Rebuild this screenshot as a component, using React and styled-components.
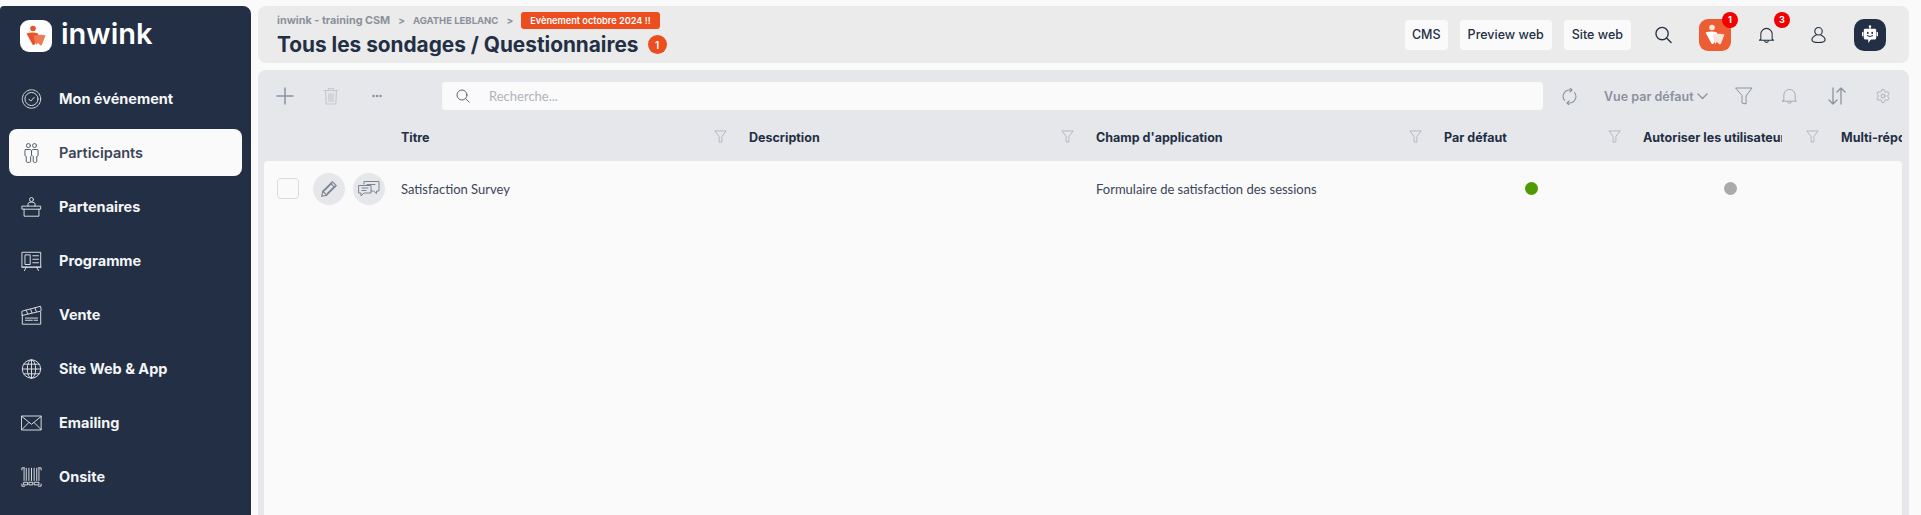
import React from "react";
import styled, { createGlobalStyle } from "styled-components";
import { Settings } from "lucide-react";

const GlobalStyle = createGlobalStyle`
  html, body {
    margin: 0;
    height: 100%;
    background: #fafafa;
    font-family: Inter, "Liberation Sans", sans-serif;
  }
  * { box-sizing: border-box; }
`;

const line = { fill: "none", stroke: "currentColor", strokeWidth: 1.1, strokeLinecap: "round", strokeLinejoin: "round" };

const Ico = ({ children }) => (
  <svg width="22" height="22" viewBox="0 0 24 24" {...line}>
    {children}
  </svg>
);

const BrandMark = ({ a, b, dot }) => (
  <svg width="32" height="32" viewBox="0 0 32 32">
    <circle cx="13" cy="8.5" r="2.8" fill={dot} />
    <path d="M6.5 13.5 Q13 11.5 18 13.5 L19 17 L14.5 24.5 Q13.5 25.5 12.5 24.5 Z" fill={a} />
    <path d="M13.5 16 Q20 14 25.5 15.5 L22 24.5 Q21 26 20 25 L18 23 L16 25 Z" fill={b} />
  </svg>
);

const EventIcon = () => (
  <Ico>
    <circle cx="12" cy="12" r="10.5" strokeDasharray="2.5 1" />
    <circle cx="12" cy="12" r="7.5" />
    <path d="M9 12.2l2.2 2.2 4-4.4" />
  </Ico>
);
const PeopleIcon = () => (
  <Ico>
    <circle cx="8.5" cy="3.5" r="2.3" />
    <circle cx="15.5" cy="3.5" r="2.3" />
    <path d="M5 8h5c1 0 2 .8 2 1.500V15l-1 1v5.500c0 .8-.6 1.200-1.200 1.200H7.200c-.7 0-1.200-.5-1.200-1.200V16l-1.500-1V9.500C4.500 8.700 4.500 8 5 8z" />
    <path d="M12 9.500C12 8.700 13 8 14 8h5c.5 0 .5.700.5 1.500V15L18 16v5.500c0 .700-.5 1.200-1.200 1.200h-1.600c-.6 0-1.200-.4-1.200-1.200V16l-1-1" />
  </Ico>
);
const PodiumIcon = () => (
  <Ico>
    <circle cx="12" cy="3.500" r="2.300" />
    <path d="M8 11V8.500C8 7 9.500 6.500 12 6.500s4 .5 4 2V11" />
    <path d="M1.500 11h21v3.500h-21z" />
    <path d="M3.500 14.500V22.500h17v-8" />
  </Ico>
);
const BoardIcon = () => (
  <Ico>
    <path d="M1.500 2h21v17h-21z" />
    <path d="M5 5h5.500v11H5zM13.500 6H20M13.500 10H20M13.500 14H20" />
    <path d="M1 19h22M6 19l-2 4M18 19l2 4" />
  </Ico>
);
const TicketsIcon = () => (
  <Ico>
    <path d="M1.500 12v10.500h21V9" />
    <path d="M1.500 7.500L22.500 2l.5 5.500-21.500 5z" />
    <path d="M6 6.500l1.500 4M11 5.500l1.500 4M16 4l1.500 4" />
    <path d="M5 15.500h14M5 18h8M15 18h4" />
  </Ico>
);
const GlobeIcon = () => (
  <Ico>
    <circle cx="12" cy="12" r="10.500" />
    <ellipse cx="12" cy="12" rx="4.800" ry="10.500" />
    <path d="M12 1.500v21M1.500 12h21M3 6.500h18M3 17.500h18" />
  </Ico>
);
const MailIcon = () => (
  <Ico>
    <path d="M1 4h22v16H1z" />
    <path d="M1 4.500l11 9 11-9M1 19.500l8-8M23 19.500l-8-8" />
  </Ico>
);
const BarcodeIcon = () => (
  <Ico>
    <path d="M1 4V1.500h3M20 1.500h3V4M1 20v2.500h3M20 22.500h3V20" />
    <path d="M3.500 2v14M6 2v14M9 2v14M12 2v14M15 2v14M18 2v14M20.500 2v14" />
    <path d="M3.500 18h4v3h-4zM9.500 18h4v3h-4zM15.500 18h5v3h-5z" />
  </Ico>
);

const navItems = [
  { label: "Mon événement", icon: <EventIcon /> },
  { label: "Participants", icon: <PeopleIcon />, active: true },
  { label: "Partenaires", icon: <PodiumIcon /> },
  { label: "Programme", icon: <BoardIcon /> },
  { label: "Vente", icon: <TicketsIcon /> },
  { label: "Site Web & App", icon: <GlobeIcon /> },
  { label: "Emailing", icon: <MailIcon /> },
  { label: "Onsite", icon: <BarcodeIcon /> },
];

const columns = [
  { title: "Titre", width: 348 },
  { title: "Description", width: 347 },
  { title: "Champ d'application", width: 348 },
  { title: "Par défaut", width: 199 },
  { title: "Autoriser les utilisateurs à répondre", width: 198 },
  { title: "Multi-réponses", width: 61, noFilter: true },
];

const FilterIcon = () => (
  <svg width="13" height="13" viewBox="0 0 14 14" fill="none" stroke="currentColor" strokeWidth="0.8" strokeLinejoin="round">
    <path d="M1 1h12L8.500 7v6h-3V7z" />
  </svg>
);

export default function App() {
  return (
    <Page>
      <GlobalStyle />
      <Sidebar>
        <Brand>
          <LogoTile>
            <BrandMark a="#e8532a" b="#ee7a52" dot="#e8532a" />
          </LogoTile>
          <BrandName>inwink</BrandName>
        </Brand>
        <Nav>
          {navItems.map((item) => (
            <NavItem key={item.label} $active={item.active}>
              <NavIcon>{item.icon}</NavIcon>
              <span>{item.label}</span>
            </NavItem>
          ))}
        </Nav>
      </Sidebar>

      <Main>
        <Header>
          <div>
            <Breadcrumb>
              <Crumb $size={10.8}>inwink - training CSM</Crumb>
              <Sep>&gt;</Sep>
              <Crumb $size={9.5}>AGATHE LEBLANC</Crumb>
              <Sep>&gt;</Sep>
              <EventPill>Evènement octobre 2024 !!</EventPill>
            </Breadcrumb>
            <TitleRow>
              <Title>Tous les sondages / Questionnaires</Title>
              <CountBadge>1</CountBadge>
            </TitleRow>
          </div>
          <HeaderActions>
            <LinkButton $pad={7}>CMS</LinkButton>
            <LinkButton>Preview web</LinkButton>
            <LinkButton>Site web</LinkButton>
            <HeaderIcon $w={17} $ml={24}>
              <svg width="18" height="18" viewBox="0 0 18 18" {...line} strokeWidth="1.4">
                <circle cx="7.500" cy="7.500" r="6.500" />
                <path d="M12.500 12.500l4.500 4.500" />
              </svg>
            </HeaderIcon>
            <OrangeTile $ml={27}>
              <BrandMark a="#fff" b="#fbe4dc" dot="#fde3da" />
              <RedBadge>1</RedBadge>
            </OrangeTile>
            <HeaderIcon $w={17} $ml={27}>
              <svg width="18" height="18" viewBox="0 0 18 18" {...line} strokeWidth="1.1">
                <path d="M3 13.500V8a6 6 0 0 1 12 0v5.500l1.500 1h-15z" />
                <path d="M7 14.800a2 2 0 0 0 4 0" />
              </svg>
              <RedBadge $top={-14} $right={-15}>3</RedBadge>
            </HeaderIcon>
            <HeaderIcon $w={15} $ml={36}>
              <svg width="16" height="18" viewBox="0 0 16 18" {...line} strokeWidth="1.200">
                <circle cx="8" cy="5" r="4" />
                <path d="M5.500 9C2.500 10.500 1 12 1 14c0 2 2 3 7 3s7-1 7-3c0-2-1.500-3.500-4.500-5" />
              </svg>
            </HeaderIcon>
            <BotTile $ml={28}>
              <svg width="16" height="20" viewBox="0 0 18 22" fill="#fff">
                <circle cx="9" cy="1.500" r="1.400" />
                <rect x="8.400" y="1.500" width="1.200" height="3" />
                <rect x="0" y="7.500" width="1.600" height="5" rx="0.600" />
                <rect x="16.400" y="7.500" width="1.600" height="5" rx="0.600" />
                <path d="M3.500 4h11a1.500 1.500 0 0 1 1.500 1.500v9a1.500 1.500 0 0 1-1.500 1.500h-4.500l-3 4v-4H3.500A1.500 1.500 0 0 1 2 14.500v-9A1.500 1.500 0 0 1 3.500 4z" />
                <rect x="5.600" y="7.500" width="1.800" height="2.200" fill="#222f44" />
                <rect x="10.600" y="7.500" width="1.800" height="2.200" fill="#222f44" />
                <path d="M5.500 11.500q3.500 2.500 7 0" fill="none" stroke="#222f44" strokeWidth="1.100" />
              </svg>
            </BotTile>
          </HeaderActions>
        </Header>

        <Panel>
          <Toolbar>
            <ToolIcon $w={18} $ml={0} $c="#8a94a3">
              <svg width="18" height="18" viewBox="0 0 18 18" {...line} strokeWidth="1.500">
                <path d="M9 1v16M1 9h16" />
              </svg>
            </ToolIcon>
            <ToolIcon $w={16} $ml={29} $c="#c4c8cf">
              <svg width="16" height="18" viewBox="0 0 16 18" {...line} strokeWidth="1.200">
                <path d="M1 3.500h14M5.500 3.500V1.500h5v2M2.500 3.500l.7 13.500h9.600l.7-13.500M6 6.500v8M8 6.500v8M10 6.500v8" />
              </svg>
            </ToolIcon>
            <ToolIcon $w={10} $ml={33} $c="#8a94a3">
              <svg width="10" height="4" viewBox="0 0 10 4" fill="currentColor">
                <circle cx="1.500" cy="2" r="1.300" />
                <circle cx="5" cy="2" r="1.300" />
                <circle cx="8.500" cy="2" r="1.300" />
              </svg>
            </ToolIcon>
            <SearchBox>
              <svg width="14" height="14" viewBox="0 0 14 14" {...line} stroke="#5c6675" strokeWidth="1">
                <circle cx="6" cy="6" r="5" />
                <path d="M9.800 9.800l3.500 3.500" />
              </svg>
              <SearchPlaceholder>Recherche...</SearchPlaceholder>
            </SearchBox>
            <ToolIcon $w={15} $ml={19} $c="#8a94a3">
              <svg width="15" height="17" viewBox="0 0 15 17" {...line}>
                <path d="M2.500 12.500A6.500 6.500 0 0 1 7.500 2l2.500 0M8 0l2 2-2 2" />
                <path d="M12.500 4.500A6.500 6.500 0 0 1 7.500 15L5 15M7 13l-2 2 2 2" />
              </svg>
            </ToolIcon>
            <ViewSelect>
              Vue par défaut
              <svg width="11" height="7" viewBox="0 0 11 7" {...line} strokeWidth="1.300">
                <path d="M1 1l4.500 4.500L10 1" />
              </svg>
            </ViewSelect>
            <ToolIcon $w={18} $ml={27} $c="#8a94a3">
              <svg width="18" height="18" viewBox="0 0 18 18" {...line} strokeWidth="1">
                <path d="M1 1h16l-6 8v8l-4-1V9z" />
              </svg>
            </ToolIcon>
            <ToolIcon $w={17} $ml={28} $c="#a0a7b2">
              <svg width="17" height="18" viewBox="0 0 18 18" {...line} strokeWidth="1">
                <path d="M3 13.500V8a6 6 0 0 1 12 0v5.500l1.500 1h-15z" />
                <path d="M7 14.800a2 2 0 0 0 4 0" />
              </svg>
            </ToolIcon>
            <ToolIcon $w={18} $ml={30} $c="#8a94a3">
              <svg width="18" height="18" viewBox="0 0 18 18" {...line} strokeWidth="1.300">
                <path d="M5 1v16M1 13l4 4 4-4M13 17V1M9 5l4-4 4 4" />
              </svg>
            </ToolIcon>
            <ToolIcon $w={16} $ml={29} $c="#a0a7b2">
              <Settings size={16} strokeWidth={1.3} />
            </ToolIcon>
          </Toolbar>

          <ColumnsRow>
            {columns.map((col) => (
              <ColumnHead key={col.title} $w={col.width} $bare={col.noFilter}>
                <ColumnLabel>{col.title}</ColumnLabel>
                {!col.noFilter && (
                  <ColumnFilter>
                    <FilterIcon />
                  </ColumnFilter>
                )}
              </ColumnHead>
            ))}
          </ColumnsRow>

          <TableBody>
            <Row>
              <RowActions>
                <Checkbox />
                <RoundAction $ml={14}>
                  <svg width="18" height="18" viewBox="0 0 16 16" {...line} strokeWidth="1">
                    <path d="M1.500 14.500l1-4.500L11 1.500l3.500 3.500L6 13.500z" />
                    <path d="M9.500 3l3.500 3.500M2.500 10L6 13.500M4 9.500L10.500 3M6.500 12L13 5.500" />
                  </svg>
                </RoundAction>
                <RoundAction $ml={8}>
                  <svg width="22" height="18" viewBox="0 0 22 18" {...line} strokeWidth="1">
                    <path d="M6 4V1.500h15V11h-2.500v2.500L15.500 11H13" />
                    <path d="M1 5.500h12V13H6l-3 3v-3H1z" />
                    <path d="M9 4.500h8M4 8h6M4 10.500h4" />
                  </svg>
                </RoundAction>
              </RowActions>
              <Cell $w={348}>Satisfaction Survey</Cell>
              <Cell $w={347} />
              <Cell $w={348}>Formulaire de satisfaction des sessions</Cell>
              <DotCell $w={199}>
                <StatusDot $c="#4e9a00" />
              </DotCell>
              <DotCell $w={198}>
                <StatusDot $c="#aaaaaa" />
              </DotCell>
            </Row>
          </TableBody>
        </Panel>
      </Main>
    </Page>
  );
}

const Page = styled.div`
  display: flex;
  height: 515px;
  padding-top: 6px;
  overflow: hidden;
  background: #fafafa;
`;

const Sidebar = styled.aside`
  flex: 0 0 251px;
  background: #222f44;
  border-radius: 4px 8px 0 0;
  padding: 14px 9px 0;
`;

const Brand = styled.div`
  display: flex;
  align-items: center;
  gap: 9px;
  padding-left: 11px;
`;

const LogoTile = styled.div`
  width: 32px;
  height: 32px;
  background: #fff;
  border-radius: 9px;
`;

const BrandName = styled.div`
  color: #fff;
  font-size: 29px;
  font-weight: 600;
  line-height: 30px;
  margin-top: -4px;
`;

const Nav = styled.nav`
  display: flex;
  flex-direction: column;
  gap: 7px;
  margin-top: 23px;
`;

const NavItem = styled.div`
  display: flex;
  align-items: center;
  height: 47px;
  padding-left: 12px;
  gap: 17px;
  border-radius: 8px;
  font-size: 14.5px;
  font-weight: ${(p) => (p.$active ? 600 : 700)};
  color: ${(p) => (p.$active ? "#3a4558" : "#f4f5f7")};
  background: ${(p) => (p.$active ? "#fafafa" : "transparent")};
`;

const NavIcon = styled.span`
  display: flex;
  width: 21px;
  height: 22px;
  align-items: center;
  justify-content: center;
  flex: none;
  opacity: 0.9;
`;

const Main = styled.main`
  flex: 1;
  min-width: 0;
  display: flex;
  flex-direction: column;
  gap: 7px;
  margin: 0 12px 0 7px;
`;

const Header = styled.header`
  flex: 0 0 57px;
  display: flex;
  align-items: center;
  justify-content: space-between;
  padding: 0 23px 0 19px;
  background: #ebebeb;
  border-radius: 8px;
`;

const Breadcrumb = styled.div`
  display: flex;
  align-items: center;
  height: 17px;
  font-weight: 700;
  font-size: 10px;
  color: #8a919c;
`;

const Crumb = styled.span`
  font-size: ${(p) => p.$size}px;
`;

const Sep = styled.span`
  margin: 0 8px;
`;

const EventPill = styled.span`
  background: #ec4e1f;
  color: #fff;
  font-size: 9.2px;
  font-weight: 600;
  height: 17px;
  line-height: 17px;
  padding: 0 9px;
  border-radius: 3px;
`;

const TitleRow = styled.div`
  display: flex;
  align-items: center;
  gap: 9px;
  margin-top: 3px;
`;

const Title = styled.h1`
  margin: 0;
  font-size: 20.8px;
  font-weight: 700;
  line-height: 26px;
  color: #222f44;
`;

const CountBadge = styled.span`
  display: flex;
  align-items: center;
  justify-content: center;
  width: 19px;
  height: 19px;
  border-radius: 50%;
  background: #ec4e1f;
  color: #fff;
  font-size: 10px;
  font-weight: 600;
`;

const HeaderActions = styled.div`
  display: flex;
  align-items: center;
  gap: 12px;
`;

const LinkButton = styled.button`
  height: 30px;
  padding: 0 ${(p) => p.$pad ?? 8}px;
  border: 0;
  border-radius: 4px;
  background: #fafafa;
  color: #222f44;
  font-family: inherit;
  font-size: 12.5px;
  font-weight: 500;
`;

const HeaderIcon = styled.span`
  position: relative;
  display: flex;
  width: ${(p) => p.$w}px;
  margin-left: ${(p) => p.$ml - 12}px;
  color: #222f44;
`;

const OrangeTile = styled.div`
  position: relative;
  width: 32px;
  height: 32px;
  margin-left: ${(p) => p.$ml - 12}px;
  background: #ec5d33;
  border-radius: 9px;
`;

const BotTile = styled.div`
  display: flex;
  align-items: center;
  justify-content: center;
  width: 32px;
  height: 32px;
  margin-left: ${(p) => p.$ml - 12}px;
  background: #222f44;
  border-radius: 10px;
`;

const RedBadge = styled.span`
  position: absolute;
  top: ${(p) => p.$top ?? -7}px;
  right: ${(p) => p.$right ?? -7}px;
  display: flex;
  align-items: center;
  justify-content: center;
  width: 16px;
  height: 16px;
  border-radius: 50%;
  background: #f00000;
  color: #fff;
  font-size: 9px;
  font-weight: 700;
`;

const Panel = styled.section`
  flex: 1;
  min-height: 0;
  display: flex;
  flex-direction: column;
  padding: 0 7px 0 6px;
  background: #e6e7eb;
  border-radius: 8px 8px 0 0;
`;

const Toolbar = styled.div`
  flex: 0 0 52px;
  display: flex;
  align-items: center;
  padding: 0 11px 0 12px;
`;

const ToolIcon = styled.span`
  display: flex;
  flex: none;
  width: ${(p) => p.$w}px;
  margin-left: ${(p) => p.$ml}px;
  color: ${(p) => p.$c};
`;

const SearchBox = styled.div`
  flex: 1;
  display: flex;
  align-items: center;
  gap: 19px;
  height: 28px;
  margin-left: 60px;
  padding-left: 14px;
  background: #fafafa;
  border-radius: 4px;
`;

const SearchPlaceholder = styled.span`
  font-family: Lato, sans-serif;
  font-size: 13px;
  color: #b0b4bb;
`;

const ViewSelect = styled.div`
  display: flex;
  flex: 0 0 104px;
  align-items: center;
  justify-content: space-between;
  margin-left: 27px;
  font-size: 12.5px;
  font-weight: 600;
  white-space: nowrap;
  color: #8a919c;
`;

const ColumnsRow = styled.div`
  flex: 0 0 39px;
  display: flex;
  align-items: center;
  padding: 0 0 8px 137px;
  overflow: hidden;
`;

const ColumnHead = styled.div`
  position: relative;
  flex: 0 0 ${(p) => p.$w}px;
  display: flex;
  align-items: center;
  padding-right: ${(p) => (p.$bare ? 0 : 59)}px;
  overflow: hidden;
`;

const ColumnLabel = styled.span`
  flex: 1;
  min-width: 0;
  overflow: hidden;
  white-space: nowrap;
  font-size: 12.5px;
  font-weight: 700;
  color: #222f44;
`;

const ColumnFilter = styled.span`
  position: absolute;
  right: 22px;
  top: 0;
  display: flex;
  color: #a4a9b2;
`;

const TableBody = styled.div`
  flex: 1;
  background: #fafafa;
  border-radius: 4px 4px 0 0;
`;

const Row = styled.div`
  display: flex;
  align-items: center;
  height: 55px;
`;

const RowActions = styled.div`
  flex: 0 0 137px;
  display: flex;
  align-items: center;
  padding-left: 13px;
`;

const Checkbox = styled.span`
  width: 22px;
  height: 21px;
  background: #fafafa;
  border: 1px solid #d9dbe0;
  border-radius: 4px;
`;

const RoundAction = styled.span`
  display: flex;
  align-items: center;
  justify-content: center;
  width: 32px;
  height: 32px;
  margin-left: ${(p) => p.$ml}px;
  border-radius: 50%;
  background: #e6e7eb;
  color: #7c8491;
`;

const Cell = styled.div`
  flex: 0 0 ${(p) => p.$w}px;
  font-family: Lato, sans-serif;
  font-size: 13px;
  color: #3a4558;
`;

const DotCell = styled.div`
  flex: 0 0 ${(p) => p.$w}px;
  display: flex;
  margin-top: -1px;
  padding-left: 81px;
`;

const StatusDot = styled.span`
  width: 13px;
  height: 13px;
  border-radius: 50%;
  background: ${(p) => p.$c};
`;
